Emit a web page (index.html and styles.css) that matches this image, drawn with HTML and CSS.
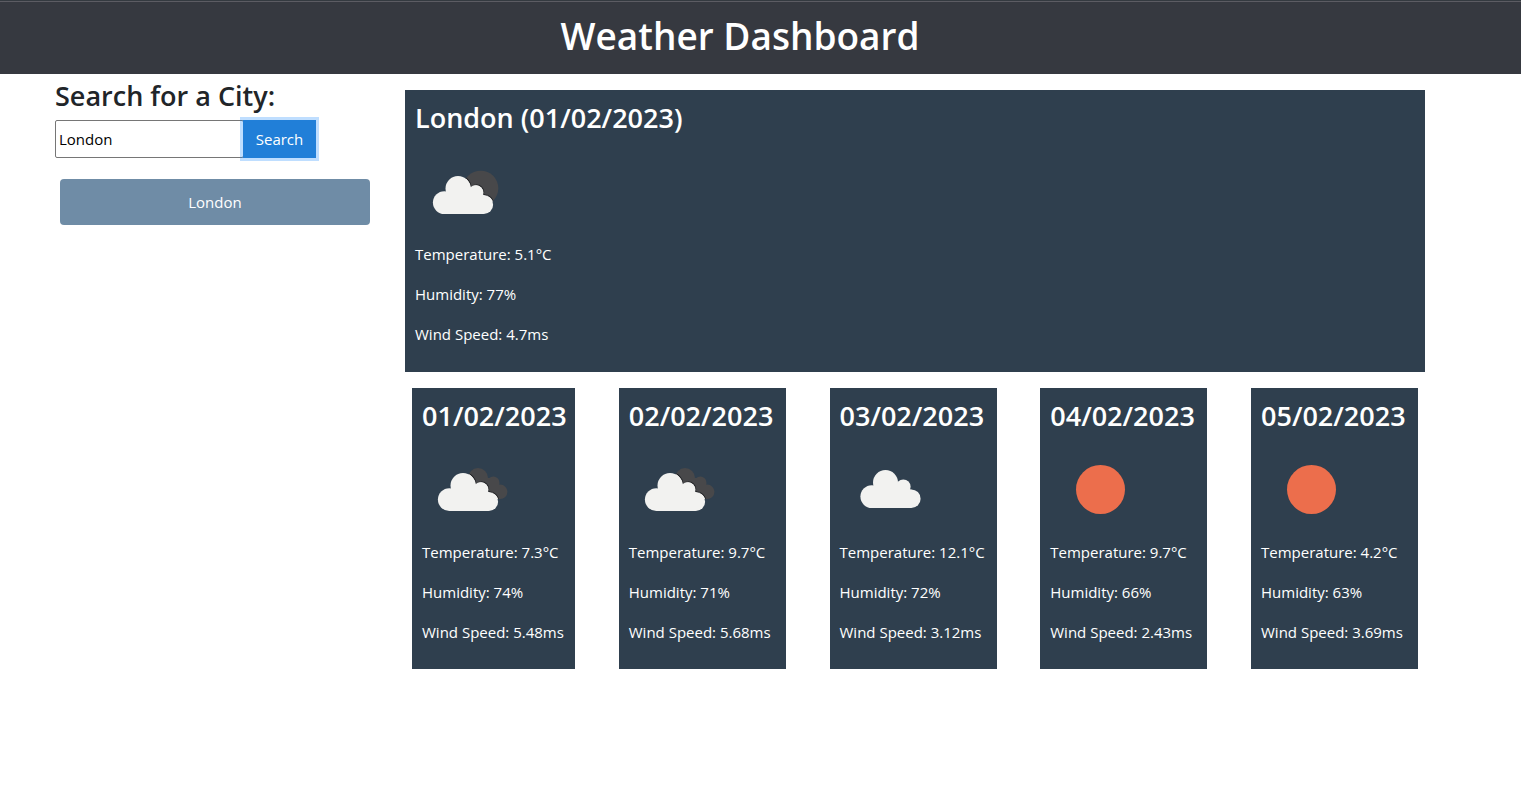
FILE: index.html
```html
<!DOCTYPE html>
<html lang="en">
<head>
<meta charset="utf-8">
<meta name="viewport" content="width=device-width, initial-scale=1">
<title>Weather Dashboard</title>
<link rel="stylesheet" href="styles.css">
</head>
<body>
<svg class="sprite" aria-hidden="true">
  <defs>
    <g id="cloud-shape">
      <circle cx="29.3" cy="60.6" r="11.4"/>
      <circle cx="43" cy="46.5" r="12.5"/>
      <circle cx="60.8" cy="50.7" r="7.3"/>
      <circle cx="68.8" cy="62.7" r="9.3"/>
      <path d="M29.3 72V50H60V53.4H68.8V72Z"/>
    </g>
    <clipPath id="disc-clip"><circle cx="65.7" cy="46.3" r="17.6"/></clipPath>
    <clipPath id="back-clip">
      <circle cx="58" cy="39" r="10"/>
      <circle cx="73.3" cy="43.7" r="6.2"/>
      <circle cx="80.2" cy="52.8" r="7.2"/>
      <path d="M58 39L73 39L80 60H62Z"/>
    </clipPath>
    <symbol id="few-clouds" viewBox="0 0 100 100">
      <g clip-path="url(#disc-clip)">
        <rect width="100" height="100" fill="#48484a"/>
        <use href="#cloud-shape" x="0.7" y="-0.7" fill="#202124" stroke="#202124" stroke-width="0.6"/>
        <use href="#cloud-shape" fill="#fff" stroke="#fff" stroke-width="0.6"/>
      </g>
      <use href="#cloud-shape" fill="#f2f2f0"/>
    </symbol>
    <symbol id="broken-clouds" viewBox="0 0 100 100">
      <g transform="translate(-2 -1)">
        <g clip-path="url(#back-clip)">
          <rect width="100" height="100" fill="#48484a"/>
          <use href="#cloud-shape" x="0.7" y="-0.7" fill="#202124" stroke="#202124" stroke-width="0.6"/>
          <use href="#cloud-shape" fill="#fff" stroke="#fff" stroke-width="0.6"/>
        </g>
        <use href="#cloud-shape" fill="#f2f2f0"/>
      </g>
    </symbol>
    <symbol id="cloud" viewBox="0 0 100 100">
      <use href="#cloud-shape" x="2.5" y="-4" fill="#f2f2f0"/>
    </symbol>
    <symbol id="sun" viewBox="0 0 100 100">
      <circle cx="50.5" cy="49.5" r="24.5" fill="#ec6e4c"/>
    </symbol>
  </defs>
</svg>

<header class="banner">
  <h1 class="banner-title">Weather Dashboard</h1>
</header>

<div class="page">
  <aside class="sidebar">
    <form class="search">
      <label class="heading search-label" for="city">Search for a City:</label>
      <div class="search-row">
        <input class="search-input" id="city" type="text" value="London">
        <button class="search-button" type="button">Search</button>
      </div>
    </form>
    <div class="history">
      <button class="history-button" type="button">London</button>
    </div>
  </aside>

  <main class="main">
    <section class="card">
      <h2 class="heading">London (01/02/2023)</h2>
      <svg class="icon" role="img" aria-label="Few clouds"><use href="#few-clouds"/></svg>
      <p class="reading">Temperature: 5.1°C</p>
      <p class="reading">Humidity: 77%</p>
      <p class="reading">Wind Speed: 4.7ms</p>
    </section>

    <section class="forecast">
      <article class="card day day-today">
        <h3 class="heading">01/02/2023</h3>
        <svg class="icon" role="img" aria-label="Broken clouds"><use href="#broken-clouds"/></svg>
        <p class="reading">Temperature: 7.3°C</p>
        <p class="reading">Humidity: 74%</p>
        <p class="reading">Wind Speed: 5.48ms</p>
      </article>
      <article class="card day">
        <h3 class="heading">02/02/2023</h3>
        <svg class="icon" role="img" aria-label="Broken clouds"><use href="#broken-clouds"/></svg>
        <p class="reading">Temperature: 9.7°C</p>
        <p class="reading">Humidity: 71%</p>
        <p class="reading">Wind Speed: 5.68ms</p>
      </article>
      <article class="card day">
        <h3 class="heading">03/02/2023</h3>
        <svg class="icon" role="img" aria-label="Cloudy"><use href="#cloud"/></svg>
        <p class="reading">Temperature: 12.1°C</p>
        <p class="reading">Humidity: 72%</p>
        <p class="reading">Wind Speed: 3.12ms</p>
      </article>
      <article class="card day">
        <h3 class="heading">04/02/2023</h3>
        <svg class="icon" role="img" aria-label="Clear sky"><use href="#sun"/></svg>
        <p class="reading">Temperature: 9.7°C</p>
        <p class="reading">Humidity: 66%</p>
        <p class="reading">Wind Speed: 2.43ms</p>
      </article>
      <article class="card day">
        <h3 class="heading">05/02/2023</h3>
        <svg class="icon" role="img" aria-label="Clear sky"><use href="#sun"/></svg>
        <p class="reading">Temperature: 4.2°C</p>
        <p class="reading">Humidity: 63%</p>
        <p class="reading">Wind Speed: 3.69ms</p>
      </article>
    </section>
  </main>
</div>
</body>
</html>
```

FILE: styles.css
```css
* {
  box-sizing: border-box;
}

body {
  margin: 0;
  background: #fff;
  color: #212529;
  font-family: "Segoe UI", "Open Sans", "Noto Sans", sans-serif;
  font-size: 15px;
  line-height: 24px;
}

.sprite {
  position: absolute;
  width: 0;
  height: 0;
}

.banner {
  padding: 11px 41px 13px 0;
  background: linear-gradient(#343a40 1px, #5c5c63 1px, #5c5c63 2px, #363940 2px);
  color: #fff;
  text-align: center;
}

.banner-title {
  margin: 0;
  font-size: 37px;
  font-weight: 600;
  line-height: 50px;
}

.page {
  display: flex;
  align-items: flex-start;
  gap: 35px;
  padding: 0 96px 0 55px;
}

.sidebar {
  flex: 0 0 315px;
  padding-top: 4px;
}

.heading {
  display: block;
  margin: 0 0 6px;
  font-size: 27px;
  font-weight: 600;
  line-height: 36px;
  white-space: nowrap;
}

.search-row {
  display: flex;
  height: 38px;
}

.search-input {
  width: 189px;
  padding: 0 3px;
  border: 1px solid #767676;
  border-radius: 2px;
  background: #fff;
  color: #000;
  font: inherit;
}

.search-button {
  width: 73px;
  margin-left: -1px;
  padding: 0;
  border: 0;
  background: #217fd8;
  box-shadow: 0 0 0 3px rgba(0, 123, 255, 0.25);
  color: #fff;
  font: inherit;
}

.history {
  padding: 21px 0 0 5px;
}

.history-button {
  width: 100%;
  padding: 11px;
  border: 0;
  border-radius: 4px;
  background: #6f8ca6;
  color: #fff;
  font: inherit;
}

.main {
  flex: 1;
  min-width: 0;
  padding-top: 16px;
}

.card {
  padding: 10px;
  background: #2f3f4e;
  color: #fff;
}

.icon {
  display: block;
  width: 100px;
  height: 100px;
}

.reading {
  margin: 0 0 16px;
  white-space: nowrap;
}

.forecast {
  display: flex;
  justify-content: space-between;
  margin-top: 16px;
  padding: 0 7px;
}

.day {
  flex: 0 0 167px;
  min-width: 0;
  padding-bottom: 9px;
}

.day-today {
  flex-basis: 163px;
}
```
